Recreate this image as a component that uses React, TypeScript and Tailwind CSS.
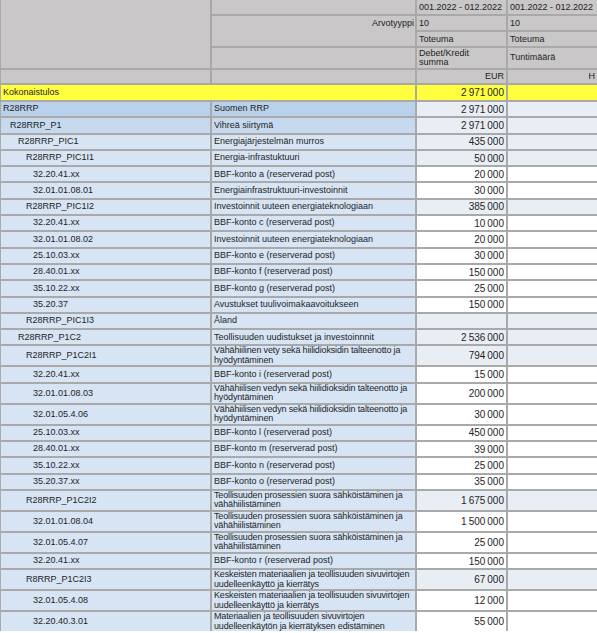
import React from 'react';

type Row = {
  code: string;
  lvl: number;
  name: string | [string, string];
  val?: string;
};

const rows: Row[] = [
  { code: 'R28RRP', lvl: 0, name: 'Suomen RRP', val: '2 971 000' },
  { code: 'R28RRP_P1', lvl: 1, name: 'Vihreä siirtymä', val: '2 971 000' },
  { code: 'R28RRP_PIC1', lvl: 2, name: 'Energiajärjestelmän murros', val: '435 000' },
  { code: 'R28RRP_PIC1I1', lvl: 3, name: 'Energia-infrastuktuuri', val: '50 000' },
  { code: '32.20.41.xx', lvl: 4, name: 'BBF-konto a (reserverad post)', val: '20 000' },
  { code: '32.01.01.08.01', lvl: 4, name: 'Energiainfrastruktuuri-investoinnit', val: '30 000' },
  { code: 'R28RRP_PIC1I2', lvl: 3, name: 'Investoinnit uuteen energiateknologiaan', val: '385 000' },
  { code: '32.20.41.xx', lvl: 4, name: 'BBF-konto c (reserverad post)', val: '10 000' },
  { code: '32.01.01.08.02', lvl: 4, name: 'Investoinnit uuteen energiateknologiaan', val: '20 000' },
  { code: '25.10.03.xx', lvl: 4, name: 'BBF-konto e (reserverad post)', val: '30 000' },
  { code: '28.40.01.xx', lvl: 4, name: 'BBF-konto f (reserverad post)', val: '150 000' },
  { code: '35.10.22.xx', lvl: 4, name: 'BBF-konto g (reserverad post)', val: '25 000' },
  { code: '35.20.37', lvl: 4, name: 'Avustukset tuulivoimakaavoitukseen', val: '150 000' },
  { code: 'R28RRP_PIC1I3', lvl: 3, name: 'Åland' },
  { code: 'R28RRP_P1C2', lvl: 2, name: 'Teollisuuden uudistukset ja investoinnnit', val: '2 536 000' },
  { code: 'R28RRP_P1C2I1', lvl: 3, name: ['Vähähiilinen vety sekä hiilidioksidin talteenotto ja', 'hyödyntäminen'], val: '794 000' },
  { code: '32.20.41.xx', lvl: 4, name: 'BBF-konto i (reserverad post)', val: '15 000' },
  { code: '32.01.01.08.03', lvl: 4, name: ['Vähähiilisen vedyn sekä hiilidioksidin talteenotto ja', 'hyödyntäminen'], val: '200 000' },
  { code: '32.01.05.4.06', lvl: 4, name: ['Vähähiilisen vedyn sekä hiilidioksidin talteenotto ja', 'hyödyntäminen'], val: '30 000' },
  { code: '25.10.03.xx', lvl: 4, name: 'BBF-konto l (reserverad post)', val: '450 000' },
  { code: '28.40.01.xx', lvl: 4, name: 'BBF-konto m (reserverad post)', val: '39 000' },
  { code: '35.10.22.xx', lvl: 4, name: 'BBF-konto n (reserverad post)', val: '25 000' },
  { code: '35.20.37.xx', lvl: 4, name: 'BBF-konto o (reserverad post)', val: '35 000' },
  { code: 'R28RRP_P1C2I2', lvl: 3, name: ['Teollisuuden prosessien suora sähköistäminen ja', 'vähähiilistäminen'], val: '1 675 000' },
  { code: '32.01.01.08.04', lvl: 4, name: ['Teollisuuden prosessien suora sähköistäminen ja', 'vähähiilistäminen'], val: '1 500 000' },
  { code: '32.01.05.4.07', lvl: 4, name: ['Teollisuuden prosessien suora sähköistäminen ja', 'vähähiilistäminen'], val: '25 000' },
  { code: '32.20.41.xx', lvl: 4, name: 'BBF-konto r (reserverad post)', val: '150 000' },
  { code: 'R8RRP_P1C2I3', lvl: 3, name: ['Keskeisten materiaalien ja teollisuuden sivuvirtojen', 'uudelleenkäyttö ja kierrätys'], val: '67 000' },
  { code: '32.01.05.4.08', lvl: 4, name: ['Keskeisten materiaalien ja teollisuuden sivuvirtojen', 'uudelleenkäyttö ja kierrätys'], val: '12 000' },
  { code: '32.20.40.3.01', lvl: 4, name: ['Materiaalien ja teollisuuden sivuvirtojen', 'uudelleenkäytön ja kierrätyksen edistäminen'], val: '55 000' },
];

const indent = ['pl-[2px]', 'pl-[9px]', 'pl-[17px]', 'pl-[25px]', 'pl-[32px]'];
const levelBg = ['bg-[#b9d1ea]', 'bg-[#c6d9ef]', 'bg-[#d6e4f4]', 'bg-[#d6e4f4]', 'bg-[#d6e4f4]'];

const num = (v?: string) => (v ? v.replace(/ /g, '\u2009') : '');

export default function App() {
  return (
    <div className="w-[597px] h-[633px] overflow-hidden bg-white font-['Liberation_Sans',Arial,sans-serif] text-[9px] text-[#1e1e1e]">
      <div className="grid grid-cols-[209px_203px_89px_89px] grid-rows-[14px_14px_14px_20px_13px_15px] gap-[2px] bg-[#a9a9a9] pl-px">
        {/* header block */}
        <div className="col-start-1 row-start-1 row-span-4 bg-[#c9c7c7]" />
        <div className="col-start-2 row-start-1 bg-[#c9c7c7]" />
        <div className="col-start-2 row-start-2 row-span-2 bg-[#c9c7c7] text-right pr-[1px] leading-[14px]">Arvotyyppi</div>
        <div className="col-start-2 row-start-4 bg-[#c9c7c7]" />
        <div className="col-start-1 row-start-5 bg-[#c9c7c7]" />
        <div className="col-start-2 row-start-5 bg-[#c9c7c7]" />

        <div className="col-start-3 row-start-1 bg-[#c9c7c7] pl-[2px] leading-[14px] whitespace-nowrap">001.2022 - 012.2022</div>
        <div className="col-start-4 row-start-1 bg-[#c9c7c7] pl-[2px] leading-[14px] whitespace-nowrap">001.2022 - 012.2022</div>
        <div className="col-start-3 row-start-2 bg-[#c9c7c7] pl-[2px] leading-[14px]">10</div>
        <div className="col-start-4 row-start-2 bg-[#c9c7c7] pl-[2px] leading-[14px]">10</div>
        <div className="col-start-3 row-start-3 bg-[#c9c7c7] pl-[2px] leading-[14px]">Toteuma</div>
        <div className="col-start-4 row-start-3 bg-[#c9c7c7] pl-[2px] leading-[14px]">Toteuma</div>
        <div className="col-start-3 row-start-4 bg-[#c9c7c7] pl-[2px] pt-[1px] leading-[9px]">
          Debet/Kredit
          <br />
          summa
        </div>
        <div className="col-start-4 row-start-4 bg-[#c9c7c7] pl-[2px] flex items-center">Tuntimäärä</div>
        <div className="col-start-3 row-start-5 bg-[#c9c7c7] pr-[2px] text-right leading-[13px]">EUR</div>
        <div className="col-start-4 row-start-5 bg-[#c9c7c7] pr-[2px] text-right leading-[13px]">H</div>

        {/* grand total */}
        <div className="col-start-1 col-span-2 row-start-6 bg-[#ffff3f] pl-[2px] leading-[15px]">Kokonaistulos</div>
        <div className="col-start-3 row-start-6 bg-[#ffff3f] pr-[2px] text-right leading-[15px] text-[10px]">{num('2 971 000')}</div>
        <div className="col-start-4 row-start-6 bg-[#ffff3f]" />

        {/* data rows */}
        {rows.map((r, i) => {
          const two = Array.isArray(r.name);
          const h = two ? 'h-[19px]' : 'h-[14.3px]';
          const leaf = /^\d/.test(r.code);
          const valBg = leaf ? 'bg-white' : 'bg-[#e9eef5]';
          return (
            <React.Fragment key={i}>
              <div className={`${h} ${levelBg[r.lvl]} ${indent[r.lvl]} flex items-center whitespace-nowrap`}>{r.code}</div>
              <div className={`${h} ${levelBg[r.lvl]} pl-[2px] flex items-center whitespace-nowrap overflow-hidden`}>
                {two ? (
                  <div className="leading-[9.5px] tracking-[-0.15px]">
                    {r.name[0]}
                    <br />
                    {r.name[1]}
                  </div>
                ) : (
                  r.name
                )}
              </div>
              <div className={`${h} ${valBg} pr-[2px] flex items-center justify-end whitespace-nowrap text-[10px]`}>{num(r.val)}</div>
              <div className={`${h} ${valBg}`} />
            </React.Fragment>
          );
        })}
      </div>
    </div>
  );
}
